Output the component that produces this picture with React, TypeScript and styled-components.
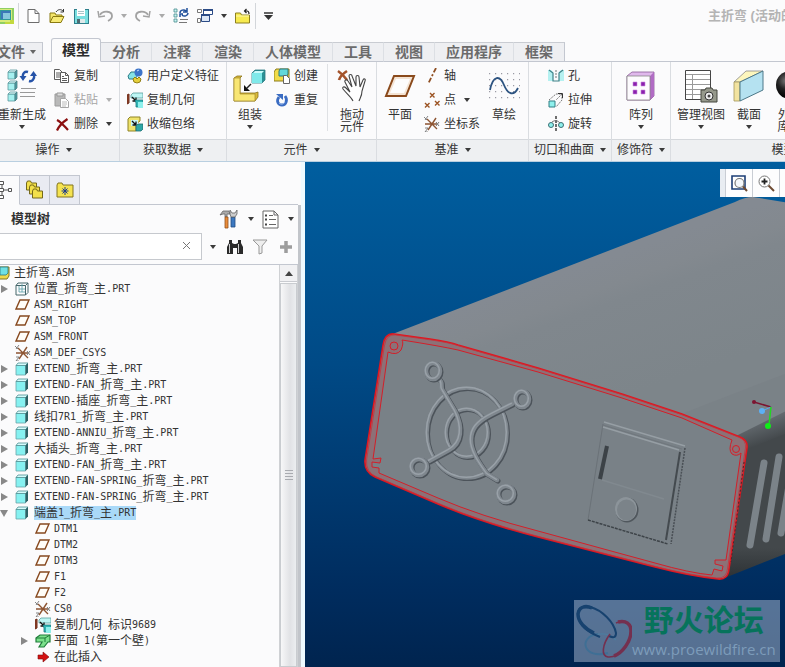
import React from "react";
import styled, { createGlobalStyle, css } from "styled-components";

const Global = createGlobalStyle`
  *, *::before, *::after { box-sizing: border-box; }
  html, body { margin: 0; height: 100%; }
  body {
    font-family: "Liberation Sans", "Noto Sans CJK SC", sans-serif;
    font-size: 12px;
    color: #333;
    background: #fbfbfc;
    overflow: hidden;
  }
  button {
    font: inherit; color: inherit; background: none; border: 0; padding: 0; margin: 0; cursor: pointer;
  }
  svg { display: block; flex: none; }
`;

/* ---------- layout parts ---------- */

const Page = styled.div`
  display: flex;
  flex-direction: column;
  height: 100vh;
  overflow: hidden;
`;

const QuickBar = styled.header`
  display: flex;
  align-items: center;
  gap: 8px;
  height: 38px;
  flex: none;
  padding-bottom: 6px;
`;

const QuickSep = styled.span`
  width: 1px;
  height: 26px;
  margin-left: -4px;
  background: #d3d6da;
`;

const DocTitle = styled.h1`
  margin: 0 0 0 auto;
  flex: 0 0 77px;
  overflow: hidden;
  white-space: nowrap;
  font-size: 13px;
  line-height: 16px;
  font-weight: 700;
  color: #b4b4b4;
`;

const TabStrip = styled.nav`
  display: flex;
  align-items: flex-end;
  height: 24px;
  flex: none;
  box-shadow: inset 0 -1px 0 #c3c7d0;
`;

const Tab = styled.button<{ $active?: boolean }>`
  height: 20px;
  padding: 0 11px;
  border-top: 1px solid #c9ccd2;
  border-right: 1px solid #dcdfe4;
  border-bottom: 1px solid #c3c7d0;
  background: #eeeff2;
  font-size: 14px;
  line-height: 17px;
  font-weight: 700;
  color: #6b6b6b;
  white-space: nowrap;
  &:last-child { border-right-color: #c3c7d0; }
  ${(p) =>
    p.$active &&
    css`
      height: 24px;
      line-height: 22px;
      padding: 0 10px;
      border: 1px solid #c3c7d0;
      border-bottom-color: #fbfbfc;
      border-radius: 3px 3px 0 0;
      background: #fbfbfc;
      color: #2b2b2b;
    `}
`;

const FileTab = styled(Tab)`
  display: flex;
  justify-content: flex-end;
  align-items: center;
  gap: 5px;
  width: 43px;
  padding: 0 6px 0 0;
  margin-right: 8px;
  border-right-color: #c3c7d0;
`;

const Ribbon = styled.div`
  display: flex;
  height: 100px;
  flex: none;
  overflow: hidden;
  border-bottom: 1px solid #b9cfe0;
`;

const Group = styled.section<{ $w: number }>`
  display: flex;
  flex-direction: column;
  flex: 0 0 ${(p) => p.$w}px;
  border-right: 1px solid #dadde1;
`;

const GroupBody = styled.div<{ $pad?: number }>`
  display: flex;
  flex: 1;
  padding-left: ${(p) => p.$pad ?? 0}px;
`;

const GroupFoot = styled.button<{ $shift?: number }>`
  display: flex;
  align-items: center;
  justify-content: center;
  gap: 6px;
  height: 22px;
  padding: 0 ${(p) => p.$shift ?? 0}px 2px 0;
  border-top: 1px solid #d5d8dc;
  background: #eef0f2;
  line-height: 18px;
  white-space: nowrap;
`;

const BigButton = styled.button<{ $w: number }>`
  display: flex;
  flex-direction: column;
  align-items: center;
  width: ${(p) => p.$w}px;
  flex: none;
  line-height: 12px;
  white-space: pre;
`;

const BigIcon = styled.span`
  display: flex;
  align-items: center;
  justify-content: center;
  height: 47px;
`;

const BigArrow = styled.span`
  margin-top: 4px;
`;

const LastLine = styled.span`
  display: flex;
  align-items: center;
  gap: 7px;
`;

const SmallColumn = styled.div<{ $indent?: number }>`
  display: flex;
  flex-direction: column;
  padding: 2px 0 0 ${(p) => p.$indent ?? 1}px;
`;

const SmallButton = styled.button<{ $off?: boolean }>`
  display: flex;
  align-items: center;
  gap: 4px;
  height: 24px;
  line-height: 24px;
  white-space: nowrap;
  color: ${(p) => (p.$off ? "#a5a5a5" : "#333")};
`;

const SmallArrow = styled.span`
  margin-left: 4px;
`;

const BodyRule = styled.span`
  width: 1px;
  margin: 2px 0 8px auto;
  background: #dfe1e4;
`;

const Main = styled.div`
  display: flex;
  flex: 1;
  min-height: 0;
`;

const Side = styled.aside`
  display: flex;
  flex-direction: column;
  flex: 0 0 305px;
  padding: 13px 4px 0 0;
  background: linear-gradient(to left, #eefaff 4px, #fbfbfc 4px);
`;

const SideTabs = styled.div`
  display: flex;
  height: 30px;
  flex: none;
  margin-right: 3px;
  box-shadow: inset 0 -1px 0 #c3c7d0;
`;

const SideTab = styled.button<{ $w: number; $active?: boolean }>`
  display: flex;
  align-items: center;
  justify-content: ${(p) => (p.$active ? "flex-start" : "center")};
  width: ${(p) => p.$w}px;
  border: solid #c3c7d0;
  border-width: 1px 1px 1px 0;
  background: ${(p) => (p.$active ? "#fbfbfc" : "#e9ebf2")};
  border-bottom-color: ${(p) => (p.$active ? "#fbfbfc" : "#c3c7d0")};
`;

const Panel = styled.div`
  display: flex;
  flex-direction: column;
  flex: 1;
  min-height: 0;
  border-right: 3px solid #c2c5ca;
`;

const PanelHead = styled.div`
  display: flex;
  align-items: center;
  height: 28px;
  flex: none;
  padding: 0 4px 0 11px;
`;

const PanelTitle = styled.h2`
  margin: 0 auto 0 0;
  font-size: 13px;
  line-height: 16px;
  font-weight: 700;
`;

const HeadTool = styled.button<{ $gap?: number }>`
  display: flex;
  align-items: center;
  gap: 9px;
  margin-left: ${(p) => p.$gap ?? 8}px;
`;

const SearchRow = styled.div`
  display: flex;
  align-items: center;
  height: 27px;
  flex: none;
  margin-bottom: 4px;
  padding-right: 6px;
`;

const SearchBox = styled.label`
  display: flex;
  align-items: center;
  flex: 1;
  height: 27px;
  border: solid #c6c9ce;
  border-width: 1px 1px 1px 0;
  background: #fff;
`;

const SearchInput = styled.input`
  flex: 1;
  min-width: 0;
  border: 0;
  outline: 0;
  background: transparent;
  font: inherit;
`;

const ClearButton = styled.button`
  width: 29px;
  padding: 0 10px 3px;
`;

const TreeArea = styled.div`
  display: flex;
  flex: 1;
  min-height: 0;
  border-top: 1px solid #c3c7d0;
`;

const Tree = styled.ul`
  flex: 1;
  margin: 0;
  padding: 0;
  list-style: none;
  overflow: hidden;
`;

const Row = styled.li<{ $level: number }>`
  display: flex;
  align-items: center;
  height: 16px;
  padding-left: ${(p) => Math.max(0, p.$level - 1) * 20}px;
  white-space: nowrap;
`;

const Toggle = styled.span`
  width: 15px;
  flex: none;
`;

const RowIcon = styled.span<{ $w: number }>`
  width: ${(p) => p.$w}px;
  flex: none;
`;

const RowLabel = styled.span<{ $sel?: boolean }>`
  display: flex;
  align-items: center;
  height: 14px;
  line-height: 14px;
  white-space: pre;
  background: ${(p) => (p.$sel ? "#a9d9f8" : "transparent")};
`;

const Latin = styled.span`
  font-family: "DejaVu Sans Mono", "Liberation Mono", monospace;
  font-size: 10px;
`;

const Scroll = styled.div`
  display: flex;
  flex-direction: column;
  width: 19px;
  border: solid #cfd1d4;
  border-width: 0 1px;
`;

const ScrollUp = styled.button`
  display: flex;
  align-items: center;
  justify-content: center;
  height: 17px;
  background: #f1f1f3;
  border-bottom: 1px solid #c9cbd0;
`;

const Thumb = styled.div`
  display: flex;
  align-items: center;
  justify-content: center;
  flex: 1;
  margin-top: 1px;
  border: 1px solid #c9ccd0;
  background: linear-gradient(to right, #f7f7f8, #e1e2e5 60%, #eceef0);
`;

const Viewport = styled.main`
  position: relative;
  flex: 1;
  min-width: 0;
  overflow: hidden;
  background: linear-gradient(#005e9f, #004a86 40%, #002c5e 85%, #00244f);
`;

const Scene = styled.svg`
  width: 100%;
  height: 100%;
`;

const ViewTools = styled.div`
  position: absolute;
  top: 7px;
  right: 0;
  display: flex;
  width: 65px;
  height: 28px;
  padding-left: 5px;
  overflow: hidden;
  background: linear-gradient(to right, #e9edf2 5px, #fdfdfe 5px);
`;

const ViewTool = styled.button`
  display: flex;
  align-items: center;
  justify-content: center;
  flex: 0 0 27px;
  border-left: 1px solid #c9cdd4;
`;

const Watermark = styled.div`
  position: absolute;
  right: 5px;
  bottom: 5px;
  display: flex;
  width: 206px;
  height: 62px;
  background: rgba(190, 205, 225, 0.45);
`;

const MarkText = styled.div`
  display: flex;
  flex-direction: column;
  align-items: center;
`;

const MarkName = styled.strong`
  margin-top: 3px;
  font-size: 30px;
  line-height: 36px;
  font-weight: 700;
  color: #06735b;
`;

const MarkUrl = styled.span`
  font-family: "Open Sans", "Noto Sans", sans-serif;
  font-size: 15px;
  line-height: 20px;
  color: #7d9cba;
`;

/* ---------- icons ---------- */

type SvgProps = { w: number; h: number; vb?: string; crisp?: boolean; children: React.ReactNode };
const Ico = ({ w, h, vb, crisp, children }: SvgProps) => (
  <svg width={w} height={h} viewBox={vb ?? `0 0 ${w} ${h}`} fill="none" shapeRendering={crisp ? "crispEdges" : undefined} aria-hidden>
    {children}
  </svg>
);

const Down = ({ c = "#3a3a3a", w = 6 }: { c?: string; w?: number }) => (
  <Ico w={w} h={4} vb="0 0 6 4"><path d="M0 0h6L3 4z" fill={c} /></Ico>
);

const AppIcon = () => (
  <Ico w={14} h={16} crisp>
    <path d="M0 0h14v16H0z" fill="#8fcf63" /><path d="M0 1h12v13H0z" fill="#d9eb7a" /><path d="M10 12h4v4h-9v-2h5z" fill="#c3d93f" />
    <path d="M0 2h11v10H0z" fill="#2f9a9a" /><path d="M1 3h9v8H1z" fill="#3b78b8" /><path d="M3 5h7v6H3z" fill="#86c8dd" />
  </Ico>
);
const NewIcon = () => (
  <Ico w={14} h={16}><path d="M1 1.500h7l4 4v9H1zM8 1.500v4h4" fill="#fff" stroke="#6d6d6d" /></Ico>
);
const OpenIcon = () => (
  <Ico w={16} h={16}>
    <path d="M1 14V5h5l1 2h6v2" fill="#f5e66b" stroke="#8a7a12" /><path d="M1 14.500l3-6h11l-3 6z" fill="#f7ea74" stroke="#8a7a12" />
    <path d="M7 4c2-3 5-3 7-1M14.500 1v3h-3" stroke="#333" />
  </Ico>
);
const SaveIcon = () => (
  <Ico w={16} h={16} crisp>
    <path d="M1 1h14v14H1z" fill="#7adfe0" stroke="#2f7f8c" /><path d="M4 1h8v7H4z" fill="#fff" /><path d="M5 3h6M5 5h6" stroke="#a9c4c8" />
    <path d="M4 11h8v4H4z" fill="#dfe9ea" /><path d="M4 11h3v4H4z" fill="#4f6a72" />
  </Ico>
);
const UndoIcon = ({ flip }: { flip?: boolean }) => (
  <Ico w={16} h={14}>
    <g transform={flip ? "matrix(-1 0 0 1 16 0)" : undefined} stroke="#a2a2a2">
      <path d="M3 6c3-5 12-4 12 1 0 3-2 4-4 5" strokeWidth="1.800" /><path d="M1 2l1 6 6-1" strokeWidth="1.500" />
    </g>
  </Ico>
);
const RegenSmall = () => (
  <Ico w={16} h={16}>
    <path d="M1 1h3v3H1zM1 6h3v3H1zM1 11h3v3H1z" fill="#c9f3f1" stroke="#4a8d90" strokeWidth=".8" />
    <path d="M7 5c0-3 4-4 6-2M14 0v4h-4M15 5c0 3-4 4-6 2M7 9V6h3" stroke="#1f4f99" strokeWidth="1.500" />
    <path d="M7 11.500h8M6 14.500h8" stroke="#777" />
  </Ico>
);
const WindowsIcon = () => (
  <Ico w={16} h={16}>
    <path d="M6.500 1.500h9v5h-9z" fill="#fff" stroke="#2b4b86" /><path d="M6 2h10" stroke="#2b4b86" strokeWidth="2" />
    <path d="M.500 1.500h4v3h-4zM.500 10.500h3v4h-3z" fill="#fff" stroke="#777" />
    <path d="M4.500 6.500h8v7h-8z" fill="#dce7f6" stroke="#2b4b86" /><path d="M4 7h9" stroke="#2b4b86" strokeWidth="2" />
  </Ico>
);
const FolderIcon = () => (
  <Ico w={16} h={16}>
    <path d="M.500 15V5h5l1 2h8v8z" fill="#f7ea4f" stroke="#8d8020" /><path d="M1 8h13" stroke="#fff9b0" />
    <path d="M9 3h3c2 0 2 1 2 3M11.500 1l-2 2 2 2" stroke="#222" strokeWidth="1.200" />
  </Ico>
);

const MiniCube = ({ x, y, s = 8 }: { x: number; y: number; s?: number }) => (
  <g transform={`translate(${x} ${y})`} strokeLinejoin="round">
    <path d={`M0 2h${s - 2}v${s - 2}H0z`} fill="#a5f0ef" stroke="#5b9ba0" strokeWidth=".8" />
    <path d={`M0 2l2-2h${s - 2}l-2 2z`} fill="#dffbfa" stroke="#5b9ba0" strokeWidth=".8" />
    <path d={`M${s - 2} 2l2-2v${s - 2}l-2 2z`} fill="#4a9fa5" stroke="#4f7f84" strokeWidth=".8" />
  </g>
);

const RegenBig = () => (
  <Ico w={30} h={34}>
    <MiniCube x={1} y={1} s={9} /><MiniCube x={1} y={12} s={9} /><MiniCube x={1} y={23} s={9} />
    <path d="M16 9c-1-5 2-7 5-6" stroke="#2653a8" strokeWidth="2.400" /><path d="M12.500 7h7l-3.500 5z" fill="#2653a8" />
    <path d="M27 5c1 5-2 8-5 7" stroke="#2653a8" strokeWidth="2.400" /><path d="M23 7h7l-3.500-5z" fill="#2653a8" />
    <path d="M14 19.500h15M13 23.500h15M13 27.500h15" stroke="#999" />
  </Ico>
);
const CopyIcon = ({ off }: { off?: boolean }) => (
  <Ico w={16} h={16}>
    {off ? (
      <>
        <path d="M1 2h10v12H1z" fill="#b9b9b9" stroke="#9b9b9b" /><path d="M3 1h6v3H3z" fill="#ddd" stroke="#999" />
        <path d="M6.500 6.500h5l3 3v6h-8z" fill="#fff" stroke="#a5a5a5" /><path d="M8 10h5M8 12h5M8 14h4" stroke="#bbb" />
      </>
    ) : (
      <>
        <path d="M.500 1.500h5l3 3v7h-8zM2 5h4M2 7h4M2 9h4" fill="#fff" stroke="#5d5d5d" />
        <path d="M6.500 4.500h5l3 3v7h-8zM11.500 4.500v3h3M8 8.500h2M8 10.500h5M8 12.500h5" fill="#fff" stroke="#5d5d5d" />
      </>
    )}
  </Ico>
);
const DeleteIcon = () => (
  <Ico w={16} h={16}><path d="M3 4c4 2 8 7 11 10M13.500 3C9 6 5 10 3 14.500" stroke="#8c1010" strokeWidth="2.200" /></Ico>
);
const UdfIcon = () => (
  <Ico w={16} h={16}>
    <path d="M1 8l3-4h5l2 3-3 4H2z" fill="#86e3e5" stroke="#2a7b86" /><circle cx="11.500" cy="4.500" r="4" fill="#3c74c9" />
    <path d="M10 3l2-1" stroke="#cfe0ff" /><path d="M6 11l2-2 2 2 2-2 2 2-1 3-3 1-3-1z" fill="#e5cf3a" stroke="#927f16" />
  </Ico>
);
const CopyGeom = () => (
  <Ico w={16} h={16}>
    <path d="M4 3l2-2h10v5H4z" fill="#bdf5f4" stroke="#5b9ea0" strokeWidth=".8" /><path d="M0 3l2-1v9l-2 1z" fill="#93452c" stroke="#6d2c18" />
    <path d="M5 5l4 4M9 5.500V9H5.500" stroke="#111" strokeWidth="1.300" />
    <path d="M9 15v-4l-1-3h8v7z" fill="#2fb6b6" stroke="#1d7c82" strokeWidth=".8" /><path d="M11 10h5v6h-5z" fill="#8ef0ec" />
  </Ico>
);
const ShrinkIcon = () => (
  <Ico w={16} h={16}>
    <path d="M1 3l2-2h10v4L9 8v7H1z" fill="#efe36c" stroke="#8f8324" /><path d="M4 4h7v6H4z" fill="#c9f7f6" />
    <path d="M5 5l4 4M9 5.500V9H5.500" stroke="#111" strokeWidth="1.300" /><path d="M9 10l2-2h5v5l-2 2H9z" fill="#2fa6a6" stroke="#1d6e72" strokeWidth=".8" />
  </Ico>
);
const AssembleIcon = () => (
  <Ico w={34} h={34}>
    <path d="M1 9l3-2h5l-2 2v15h15l3-1v5l-3 4H1z" fill="#d9b93a" stroke="#8a741d" strokeWidth=".8" /><path d="M1 9h6v16h15v7H1z" fill="#f8e673" stroke="#a58b28" strokeWidth=".7" />
    <path d="M19 4l3-3h10v10l-3 3H19z" fill="#2a9095" stroke="#2c7a80" strokeWidth=".8" /><path d="M19 4h10v10H19z" fill="#7fe9ea" /><path d="M20 4l2-2h9l-2 2z" fill="#c9fafa" />
    <path d="M18 15l-4 4" stroke="#222" strokeWidth="1.400" /><path d="M11 22v-6l6 6z" fill="#111" />
  </Ico>
);
const CreateIcon = () => (
  <Ico w={16} h={16}>
    <path d="M0 4l2-3h13v9l-2 3H0z" fill="#f1dc49" stroke="#8c7c1d" /><path d="M5 3l1-2h8v5l-1 2H5z" fill="#63d8da" stroke="#2c7a80" />
    <path d="M9.500 7.500h3l3 3v5h-6z" fill="#fff" stroke="#666" />
  </Ico>
);
const RepeatIcon = () => (
  <Ico w={16} h={16}><path d="M5 5c-3 4-1 8 3 8s6-5 3-9" stroke="#3a6cc2" strokeWidth="2.800" /><path d="M2 2h7v6z" fill="#3a6cc2" /><path d="M5 11c2 2 5 1 6-1" stroke="#a9c4f2" /></Ico>
);
const DragIcon = () => (
  <Ico w={30} h={34}>
    <path d="M1 2c3 2 6 5 9 9M10 2C7 4 3 7 2 11" stroke="#a4532b" strokeWidth="2.600" />
    <path d="M16 32c-2-4-6-7-10-12-1-2 1-3 3-1l4 4L8 13c-1-2 2-3 3-1l4 6-3-11c0-2 3-2 3 0l4 10V8c0-2 3-2 3 0l1 10 3-7c1-2 3-1 2 1l-3 10c0 5-2 7-3 10" fill="#fff" stroke="#444" strokeWidth="1.100" />
  </Ico>
);
const PlaneBig = () => (
  <Ico w={32} h={24}>
    <path d="M10 2h20l-8 20H2z" fill="#f4e4d4" stroke="#8a4a1c" strokeWidth="2" /><path d="M12 5h14l-6 14H6z" fill="#fdfdfd" />
  </Ico>
);
const AxisIcon = () => (
  <Ico w={16} h={16}><path d="M12 0L4 16" stroke="#8f4f22" strokeWidth="1.800" strokeDasharray="5 2 2 2" /></Ico>
);
const Cross = ({ x, y }: { x: number; y: number }) => (
  <path d={`M${x - 2} ${y - 2}l4.500 4.500M${x + 2.5} ${y - 2}l-4.500 4.500`} stroke="#9c5424" strokeWidth="1.400" />
);
const PointIcon = () => <Ico w={16} h={16}><Cross x={8} y={3} /><Cross x={3} y={13} /><Cross x={13} y={11} /></Ico>;
const CsysIcon = () => (
  <Ico w={16} h={16}>
    <path d="M3 3l10 10M12 2L4 14M1 8h12" stroke="#8d5432" strokeWidth="1.400" /><path d="M12 6l3 4M15 6l-3 4" stroke="#777" />
    <path d="M0 1l3 3M4 0L1 4M1 12h3l-3 4h3" stroke="#777" strokeWidth=".9" />
  </Ico>
);
const dots = Array.from({ length: 30 }, (_, i) => ({ x: (i % 6) * 6, y: Math.floor(i / 6) * 6 + 1 }));
const SketchIcon = () => (
  <Ico w={31} h={28}>
    {dots.map((d) => <path key={`${d.x}-${d.y}`} d={`M${d.x} ${d.y}h1.200v1.200h-1.200z`} fill="#9a9aa4" />)}
    <path d="M1 18C4 3 11 3 15 13S25 24 29 16" stroke="#2c5380" strokeWidth="1.800" />
  </Ico>
);
const HoleIcon = () => (
  <Ico w={16} h={14}>
    <path d="M0 1h3l2 2v9H0zM16 1h-3l-2 2v9h5z" fill="#b5f1f1" /><path d="M1 1l4 3v8h6V4l4-3" stroke="#3f8288" strokeWidth="1.200" /><path d="M8 1v9" stroke="#777" strokeDasharray="2 1" />
  </Ico>
);
const ExtrudeIcon = () => (
  <Ico w={16} h={16}><path d="M1 9h6v6H1z" fill="#8ef0ec" stroke="#337e85" /><path d="M1 8l7-6h6v6l-6 7M14 2L8 8" stroke="#777" strokeDasharray="2 1" /><path d="M10 1.500h4.500V6" stroke="#333" /></Ico>
);
const RevolveIcon = () => (
  <Ico w={16} h={16}><path d="M8 0v16" stroke="#333" strokeDasharray="3 1" strokeWidth="1.400" /><circle cx="3" cy="9" r="2.500" fill="#8ef0ec" stroke="#3c6f74" /><circle cx="13" cy="9" r="2.500" fill="#8ef0ec" stroke="#3c6f74" /><path d="M4 6c3-2 5-2 8 1" stroke="#777" /></Ico>
);
const PatternIcon = () => (
  <Ico w={30} h={32}>
    <path d="M1 6l5-4h22v24l-4 4H1z" fill="#e0b8ec" stroke="#8b5a98" strokeWidth=".8" /><path d="M24 6l4-4v24l-4 4z" fill="#b16cc4" /><path d="M1 6h23v24H1z" fill="#fdfbfe" stroke="#888" strokeWidth=".8" />
    {[[7, 12], [15, 12], [7, 20], [15, 20]].map(([x, y]) => (
      <path key={`${x}-${y}`} d={`M${x} ${y}h4v4h-4z`} fill="#8a1fae" stroke="#c98bdc" strokeWidth=".6" />
    ))}
  </Ico>
);
const ManageIcon = () => (
  <Ico w={34} h={34}>
    <path d="M1.500 1.500h25v29h-25z" fill="#fff" stroke="#444" /><path d="M2 5.500h24M2 10.500h24M2 15.500h24M2 20.500h24M2 25.500h24M8.500 5v25" stroke="#999" />
    <path d="M17 21h4l1-2h6l1 2h4v12H17z" fill="#96998c" stroke="#44463f" /><circle cx="25" cy="27" r="4" fill="#eee" stroke="#333" /><circle cx="25" cy="27" r="1.500" fill="#444" />
  </Ico>
);
const SectionIcon = () => (
  <Ico w={32} h={32}>
    <path d="M1 12L13 1h17L7 12z" fill="#fdf6bd" stroke="#888" strokeWidth=".8" /><path d="M1 12h6v19H1z" fill="#f2e3a0" stroke="#a4975c" strokeWidth=".8" />
    <path d="M7 12L30 1v19L7 31z" fill="#b5e2f1" stroke="#4c7889" />
  </Ico>
);
const BallIcon = () => (
  <Ico w={30} h={34}>
    <defs><radialGradient id="ball" cx=".35" cy=".35" r=".6"><stop offset="0" stopColor="#777" /><stop offset=".5" stopColor="#222" /><stop offset="1" stopColor="#000" /></radialGradient></defs>
    <circle cx="15" cy="16" r="14" fill="url(#ball)" />
  </Ico>
);

const TreeTabIcon = () => (
  <Ico w={13} h={20}>
    <path d="M0 10h9M2 4v12" stroke="#555" />
    <path d="M-.500 1.500h4v3h-4zM-.500 8.500h4v3h-4zM-.500 15.500h4v3h-4zM8.500 8.500h3v3h-3z" fill="#fff" stroke="#555" />
  </Ico>
);
const FoldersIcon = () => (
  <Ico w={18} h={20}>
    {[0, 4, 8].map((o) => (
      <path key={o} d={`M${0.5 + o * 0.75} ${10 + o}V${3 + o}l1-2h3l1 2h5v7z`} fill="#f3e04a" stroke="#75691a" />
    ))}
  </Ico>
);
const StarFolder = () => (
  <Ico w={18} h={16}><path d="M1 15V3l1-2h4l1 2h10v12z" fill="#f5e350" stroke="#827520" /><path d="M9 5v8M5.500 9h7M6.500 6.500l5 5M11.500 6.500l-5 5" stroke="#1c3b8c" /></Ico>
);
const ToolsIcon = () => (
  <Ico w={20} h={20}>
    <path d="M1 6l3-4h6l1 3H8v3H6V5H4z" fill="#aaa" stroke="#666" strokeWidth=".8" /><path d="M6 8h3v11H6z" fill="#e98c3a" stroke="#93511c" strokeWidth=".8" />
    <path d="M12 8h4v10h-4z" fill="#3c78c0" stroke="#214b82" strokeWidth=".8" /><path d="M11 1v4l1 3h4l2-3V1l-2 3h-3z" fill="#ccc" stroke="#666" strokeWidth=".8" />
  </Ico>
);
const ListIcon = () => (
  <Ico w={17} h={19}><path d="M1 1h11l4 4v13H1zM12 1v4h4" fill="#fff" stroke="#666" /><path d="M7 5.500h4M7 9.500h7M7 14.500h7" stroke="#666" /><path d="M3 4.500h2v2H3zM3 8.500h2v2H3zM3 13.500h2v2H3z" fill="#444" /></Ico>
);
const BinocularsIcon = () => (
  <Ico w={18} h={16}><path d="M3 1h3v3l2 1h2l2-1V1h3v3l2 4v7h-6V9H7v6H1V8l2-4z" fill="#2a2a2a" /><path d="M3.500 5v9M12.500 5v9" stroke="#cfcfcf" /></Ico>
);
const FunnelIcon = () => (
  <Ico w={16} h={16}><path d="M1 1h14l-5 6v7l-3 1V7z" fill="#eee" stroke="#999" /></Ico>
);
const PlusIcon = () => <Ico w={12} h={12}><path d="M6 0v12M0 6h12" stroke="#9d9d9d" strokeWidth="3.500" /></Ico>;
const ClearIcon = () => <Ico w={9} h={9}><path d="M1 1l7 7M8 1L1 8" stroke="#777" /></Ico>;

const PlaneIcon = () => <Ico w={16} h={12}><path d="M5 1h9l-4 9H1z" fill="#fffdf8" stroke="#87491f" strokeWidth="1.400" /></Ico>;
const PartIcon = () => (
  <Ico w={14} h={14}><path d="M1 3.500h9.500V13H1z" fill="#86f1f1" stroke="#6aa5a8" strokeWidth=".8" /><path d="M1 3.500L3 1h10l-2.500 2.500z" fill="#d5fbfb" stroke="#4d9093" strokeWidth=".8" /><path d="M10.500 3.500L13 1v9.500L10.500 13z" fill="#2b6266" /></Ico>
);
const RootIcon = () => (
  <Ico w={11} h={14}><path d="M-4 4l2-3H9v9l-2 3H-4z" fill="#efd94a" stroke="#83761d" /><path d="M0 1h8v6L6 9h-6z" fill="#6fe0e3" stroke="#2c7a80" strokeWidth=".8" /></Ico>
);
const WirePart = () => (
  <Ico w={14} h={14}><path d="M1 3.500h9.500V13H1zM1 3.500L3 1h10l-2.500 2.500M13 1v9.500L10.500 13" stroke="#44666a" /><path d="M4 4v6h6M7 2v8M4 7h6" stroke="#58a0a6" strokeWidth=".8" /></Ico>
);
const SheetIcon = () => (
  <Ico w={16} h={15}><path d="M1 4l4-3h10v7h-2l-4 5H4l3-5H1z" fill="#7be08b" stroke="#1f7c3a" strokeWidth="1.200" /><path d="M1 4h9l5-3M10 4v4" stroke="#1f7c3a" /></Ico>
);
const InsertIcon = () => <Ico w={16} h={12}><path d="M3 4h5V1l6 5-6 5V8H3z" fill="#d31212" stroke="#7d0c0c" strokeWidth=".6" /></Ico>;

const ZoomFit = () => (
  <Ico w={17} h={17}><path d="M1 1h13v13H1z" fill="#fff" stroke="#1d3e75" strokeWidth="1.600" /><circle cx="8.500" cy="8" r="4.500" fill="#f4f8fc" stroke="#777" strokeWidth="1.200" /><path d="M12 11.500l4 4.500" stroke="#6d4a32" strokeWidth="2" /></Ico>
);
const ZoomIn = () => (
  <Ico w={17} h={17}><circle cx="6.500" cy="6.500" r="5.500" fill="#fff" stroke="#777" /><path d="M6.500 3.500v6M3.500 6.500h6" stroke="#222" strokeWidth="1.800" /><path d="M10.500 10.500l5.500 5.500" stroke="#6d4a32" strokeWidth="2" /></Ico>
);

/* ---------- ribbon pieces ---------- */

type BigProps = { w: number; icon: React.ReactNode; label: string; last?: string; arrow?: boolean };
const Big = ({ w, icon, label, last, arrow }: BigProps) => (
  <BigButton type="button" $w={w}>
    <BigIcon>{icon}</BigIcon>
    {label}
    {last && <LastLine>{last}<Down /></LastLine>}
    {arrow && <BigArrow><Down /></BigArrow>}
  </BigButton>
);
const Small = ({ icon, label, arrow, off }: { icon: React.ReactNode; label: string; arrow?: boolean; off?: boolean }) => (
  <SmallButton type="button" $off={off} disabled={off}>
    {icon}
    {label}
    {arrow && <SmallArrow><Down c={off ? "#b0b0b0" : undefined} /></SmallArrow>}
  </SmallButton>
);
const Foot = ({ children, shift }: { children: string; shift?: number }) => (
  <GroupFoot type="button" $shift={shift}>{children}<Down /></GroupFoot>
);

/* ---------- tree ---------- */

type Kind = "root" | "wire" | "plane" | "csys" | "part" | "geom" | "sheet" | "insert";
const kinds: Record<Kind, React.ReactNode> = {
  root: <RootIcon />, wire: <WirePart />, plane: <PlaneIcon />, csys: <CsysIcon />,
  part: <PartIcon />, geom: <CopyGeom />, sheet: <SheetIcon />, insert: <InsertIcon />,
};
type TreeNode = { level: number; kind: Kind; text: string; open?: boolean; sel?: boolean };
const nodes: TreeNode[] = [
  { level: 0, kind: "root", text: "主折弯.ASM" },
  { level: 1, kind: "wire", text: "位置_折弯_主.PRT", open: false },
  { level: 1, kind: "plane", text: "ASM_RIGHT" },
  { level: 1, kind: "plane", text: "ASM_TOP" },
  { level: 1, kind: "plane", text: "ASM_FRONT" },
  { level: 1, kind: "csys", text: "ASM_DEF_CSYS" },
  { level: 1, kind: "part", text: "EXTEND_折弯_主.PRT", open: false },
  { level: 1, kind: "part", text: "EXTEND-FAN_折弯_主.PRT", open: false },
  { level: 1, kind: "part", text: "EXTEND-插座_折弯_主.PRT", open: false },
  { level: 1, kind: "part", text: "线扣7R1_折弯_主.PRT", open: false },
  { level: 1, kind: "part", text: "EXTEND-ANNIU_折弯_主.PRT", open: false },
  { level: 1, kind: "part", text: "大插头_折弯_主.PRT", open: false },
  { level: 1, kind: "part", text: "EXTEND-FAN_折弯_主.PRT", open: false },
  { level: 1, kind: "part", text: "EXTEND-FAN-SPRING_折弯_主.PRT", open: false },
  { level: 1, kind: "part", text: "EXTEND-FAN-SPRING_折弯_主.PRT", open: false },
  { level: 1, kind: "part", text: "端盖1_折弯_主.PRT", open: true, sel: true },
  { level: 2, kind: "plane", text: "DTM1" },
  { level: 2, kind: "plane", text: "DTM2" },
  { level: 2, kind: "plane", text: "DTM3" },
  { level: 2, kind: "plane", text: "F1" },
  { level: 2, kind: "plane", text: "F2" },
  { level: 2, kind: "csys", text: "CS0" },
  { level: 2, kind: "geom", text: "复制几何 标识9689" },
  { level: 2, kind: "sheet", text: "平面 1(第一个壁)", open: false },
  { level: 2, kind: "insert", text: "在此插入" },
];

const Mixed = ({ text }: { text: string }) => (
  <>
    {text.split(/([\x20-\x7e]+)/).filter(Boolean).map((run, i) =>
      /^[\x20-\x7e]/.test(run) ? <Latin key={i}>{run}</Latin> : <span key={i}>{run}</span>
    )}
  </>
);

const TreeRow = ({ node }: { node: TreeNode }) => (
  <Row $level={node.level}>
    {node.level > 0 && (
      <Toggle>
        {node.open === false && <Ico w={8} h={8}><path d="M1 0l7 4-7 4z" fill="#888" /></Ico>}
        {node.open && <Ico w={8} h={8}><path d="M0 1h8L4 8z" fill="#888" /></Ico>}
      </Toggle>
    )}
    <RowIcon $w={node.level ? 19 : 14}>{kinds[node.kind]}</RowIcon>
    <RowLabel $sel={node.sel}><Mixed text={node.text} /></RowLabel>
  </Row>
);

/* ---------- 3D view ---------- */

const FACE =
  "M394 334L430 339Q450 342 458 345L538 368L622 394L682 414L740 437Q748 440 747 448L729 569Q728 580 718 579Q690 576 655 567L538 537Q480 522 438 504L375 477Q364 472 365 460L383 345Q385 333 394 334Z";
const INNER =
  "M402 340Q440 346 458 350L538 372L622 398L682 418L732 440Q728 450 732 454Q737 457 741 453L726 560L715 560V564L723 566L722 571L714 569L712 575Q690 573 655 563L538 531Q480 516 438 498L379 473V468L372 467V462L380 463L381 458L373 459L388 352Q397 356 401 350Q404 343 402 340Z";

const wires = [
  "M438 378C445 384 439 387 443 391L455 411C463 427 462 443 449 450L429 461",
  "M512 404L492 414C476 422 471 430 471 440C471 452 480 464 487 474L497 480",
];
const ring = (cx: number, cy: number, rx: number, ry: number) =>
  `M${cx - rx} ${cy}A${rx} ${ry} 0 1 1 ${cx + rx} ${cy}A${rx} ${ry} 0 1 1 ${cx - rx} ${cy}`;
const eyes = [ring(433, 371, 7, 8), ring(522, 399, 7, 8), ring(419, 467, 8, 8), ring(506, 494, 8, 8)];

const Wire = ({ d, w = 4 }: { d: string; w?: number }) => (
  <g fill="none" strokeLinecap="round">
    <path d={d} stroke="#4c535a" strokeWidth={w} transform="translate(1 1)" />
    <path d={d} stroke="#7f878e" strokeWidth={w - 0.5} />
    <path d={d} stroke="#99a1a8" strokeWidth="1.500" transform="translate(-.7 -.7)" />
  </g>
);

const Model = () => (
  <Scene viewBox="305 162 480 505" preserveAspectRatio="xMinYMin slice" role="img" aria-label="三维模型">
    <defs>
      <linearGradient id="roof" x1="600" y1="260" x2="646" y2="390" gradientUnits="userSpaceOnUse">
        <stop offset="0" stopColor="#848a92" /><stop offset=".2" stopColor="#83898f" /><stop offset=".32" stopColor="#80878d" /><stop offset="1" stopColor="#7d858a" />
      </linearGradient>
      <linearGradient id="bend" x1="752" y1="410" x2="764" y2="444" gradientUnits="userSpaceOnUse">
        <stop offset="0" stopColor="#7a8187" /><stop offset=".5" stopColor="#5c6267" /><stop offset="1" stopColor="#42474a" />
      </linearGradient>
      <linearGradient id="flank" x1="0" y1="440" x2="0" y2="575" gradientUnits="userSpaceOnUse">
        <stop offset="0" stopColor="#43484b" /><stop offset=".8" stopColor="#43484b" /><stop offset="1" stopColor="#2f3437" />
      </linearGradient>
    </defs>
    <path d="M390 335L735 202Q745 197 753 197L790 203V430L747 450L680 414L570 379L457 345Z" fill="url(#roof)" />
    <path d="M684 413L790 372V412L740 438Z" fill="#798086" opacity=".7" />
    <path d="M736 436L790 409V440L747 455Z" fill="url(#bend)" />
    <path d="M745 450L790 432V552L727 577Z" fill="url(#flank)" />
    <g stroke="#7b8389" strokeWidth="7" strokeLinecap="round"><path d="M764 463L750 545M779 457L766 539M793 462L781 533" /></g>
    <path d={FACE} fill="#8c7177" stroke="#df1720" strokeWidth="1.600" />
    <path d={FACE} fill="none" stroke="#c5333c" strokeWidth=".8" transform="translate(557 457) scale(.992) translate(-557 -457)" />
    <path d={INNER} fill="#798187" stroke="#d2202a" strokeWidth="1" />
    <g fill="none" stroke="#d81d27"><circle cx="394" cy="346" r="4" /><circle cx="736" cy="449" r="3.500" /></g>
    <path d="M744 462L731 562" stroke="#47282d" strokeDasharray="2 2" />

    <Wire d={ring(467, 433, 40, 45)} w={4} /><Wire d={ring(467, 433, 21, 24)} w={4} />
    {wires.map((d) => <Wire key={d} d={d} w={5} />)}
    {eyes.map((d) => <Wire key={d} d={d} w={5} />)}

    <path d="M603 422L685 447L670 544L588 520Z" fill="#798187" />
    <path d="M603 424L588 520" stroke="#6b7278" />
    <path d="M604 422L685 446M603 427L679 450" stroke="#969ea4" strokeWidth="1.600" />
    <path d="M603 425L682 449" stroke="#70777d" />
    <path d="M607 446L600 479" stroke="#3c4247" strokeWidth="4" />
    <path d="M680 452L666 540" stroke="#444a4f" strokeWidth="2" /><path d="M685 448L671 544" stroke="#4a5056" strokeWidth="1.500" strokeDasharray="2 1" />
    <path d="M588 520L668 544" stroke="#3d4348" strokeWidth="1.500" strokeDasharray="3 1" />
    <path d="M602 480L664 499" fill="none" stroke="#81898f" strokeWidth="1.500" />
    <ellipse cx="627" cy="510" rx="11.500" ry="12.500" fill="#50575d" /><ellipse cx="626" cy="509" rx="11" ry="12" fill="#8c949a" /><ellipse cx="626.500" cy="510" rx="9.500" ry="10.500" fill="#7b8389" />

    <path d="M771 407L754 402" stroke="#7c1430" strokeWidth="1.500" /><circle cx="754" cy="402" r="2" fill="#7c1430" />
    <path d="M771 407L762 411" stroke="#58a9ee" /><circle cx="762" cy="411" r="3" fill="#5cb0f5" />
    <path d="M771 407L769 425" stroke="#20d820" strokeWidth="1.500" /><circle cx="768" cy="426" r="3" fill="#10ee18" />
  </Scene>
);

const MarkLogo = () => (
  <svg width="58" height="62" viewBox="0 0 58 62" fill="none" aria-hidden>
    <path d="M24 34C14 35 10 42 12 47C14 53 22 56 34 53" stroke="#3f6f95" strokeWidth="2" />
    <path d="M22 35C30 32 38 35 42 40" stroke="#4d7c9f" strokeWidth="1.300" />
    <path d="M26 37C16 33 6 26 4 16C3 8 8 5 16 7C28 10 40 22 42 33C42 38 39 38 35 36" stroke="#17426f" strokeWidth="2" />
    <path d="M20 33C11 29 4 22 4 14C5 7 11 5 18 8" stroke="#17426f" strokeWidth="3.500" />
    <path d="M42 23C50 19 57 22 57 31C57 44 45 58 34 57C27 56 28 45 36 34" stroke="#74304f" strokeWidth="1.600" />
    <path d="M44 22C52 20 57 24 57 31C57 42 48 53 40 56" stroke="#74304f" strokeWidth="3.500" />
  </svg>
);

/* ---------- page ---------- */

const tabs = ["模型", "分析", "注释", "渲染", "人体模型", "工具", "视图", "应用程序", "框架"];

export default function App() {
  return (
    <Page>
      <Global />
      <QuickBar>
        <button type="button" aria-label="应用"><AppIcon /></button>
        <QuickSep />
        <button type="button" aria-label="新建"><NewIcon /></button>
        <button type="button" aria-label="打开"><OpenIcon /></button>
        <button type="button" aria-label="保存"><SaveIcon /></button>
        <button type="button" aria-label="撤消"><UndoIcon /></button>
        <button type="button" aria-label="撤消列表"><Down c="#aaa" /></button>
        <button type="button" aria-label="重做"><UndoIcon flip /></button>
        <button type="button" aria-label="重做列表"><Down c="#aaa" /></button>
        <button type="button" aria-label="重新生成"><RegenSmall /></button>
        <button type="button" aria-label="窗口"><WindowsIcon /></button>
        <button type="button" aria-label="窗口列表"><Down /></button>
        <button type="button" aria-label="关闭"><FolderIcon /></button>
        <QuickSep />
        <button type="button" aria-label="自定义">
          <Ico w={9} h={8}><path d="M0 1h9" stroke="#333" strokeWidth="1.500" /><path d="M0 3h9L4.500 8z" fill="#333" /></Ico>
        </button>
        <DocTitle>主折弯 (活动的)</DocTitle>
      </QuickBar>

      <TabStrip>
        <FileTab type="button">文件<Down c="#666" /></FileTab>
        {tabs.map((t, i) => <Tab key={t} type="button" $active={i === 0}>{t}</Tab>)}
      </TabStrip>

      <Ribbon>
        <Group $w={120}>
          <GroupBody>
            <Big w={44} icon={<RegenBig />} label="重新生成" arrow />
            <SmallColumn $indent={10}>
              <Small icon={<CopyIcon />} label="复制" />
              <Small icon={<CopyIcon off />} label="粘贴" arrow off />
              <Small icon={<DeleteIcon />} label="删除" arrow />
            </SmallColumn>
          </GroupBody>
          <Foot shift={12}>操作</Foot>
        </Group>
        <Group $w={107}>
          <GroupBody $pad={6}>
            <SmallColumn>
              <Small icon={<UdfIcon />} label="用户定义特征" />
              <Small icon={<CopyGeom />} label="复制几何" />
              <Small icon={<ShrinkIcon />} label="收缩包络" />
            </SmallColumn>
          </GroupBody>
          <Foot>获取数据</Foot>
        </Group>
        <Group $w={150}>
          <GroupBody>
            <Big w={46} icon={<AssembleIcon />} label="组装" arrow />
            <SmallColumn>
              <Small icon={<CreateIcon />} label="创建" />
              <Small icon={<RepeatIcon />} label="重复" />
            </SmallColumn>
            <BodyRule />
            <Big w={48} icon={<DragIcon />} label={"拖动\n元件"} />
          </GroupBody>
          <Foot>元件</Foot>
        </Group>
        <Group $w={150}>
          <GroupBody>
            <Big w={46} icon={<PlaneBig />} label="平面" />
            <SmallColumn>
              <Small icon={<AxisIcon />} label="轴" />
              <Small icon={<PointIcon />} label="点" arrow />
              <Small icon={<CsysIcon />} label="坐标系" />
            </SmallColumn>
            <Big w={48} icon={<SketchIcon />} label="草绘" />
          </GroupBody>
          <Foot>基准</Foot>
        </Group>
        <Group $w={83}>
          <GroupBody $pad={18}>
            <SmallColumn>
              <Small icon={<HoleIcon />} label="孔" />
              <Small icon={<ExtrudeIcon />} label="拉伸" />
              <Small icon={<RevolveIcon />} label="旋转" />
            </SmallColumn>
          </GroupBody>
          <Foot>切口和曲面</Foot>
        </Group>
        <Group $w={59}>
          <GroupBody>
            <Big w={58} icon={<PatternIcon />} label="阵列" arrow />
          </GroupBody>
          <Foot>修饰符</Foot>
        </Group>
        <Group $w={262}>
          <GroupBody>
            <Big w={60} icon={<ManageIcon />} label="管理视图" arrow />
            <Big w={36} icon={<SectionIcon />} label="截面" arrow />
            <Big w={46} icon={<BallIcon />} label="外观" last="库" />
          </GroupBody>
          <Foot>模型显示</Foot>
        </Group>
      </Ribbon>

      <Main>
        <Side>
          <SideTabs>
            <SideTab type="button" $w={20} $active aria-label="模型树"><TreeTabIcon /></SideTab>
            <SideTab type="button" $w={30} aria-label="文件夹浏览器"><FoldersIcon /></SideTab>
            <SideTab type="button" $w={30} aria-label="收藏夹"><StarFolder /></SideTab>
          </SideTabs>
          <Panel>
            <PanelHead>
              <PanelTitle>模型树</PanelTitle>
              <HeadTool type="button" aria-label="设置"><ToolsIcon /><Down /></HeadTool>
              <HeadTool type="button" $gap={8} aria-label="显示"><ListIcon /><Down /></HeadTool>
            </PanelHead>
            <SearchRow>
              <SearchBox>
                <SearchInput type="text" aria-label="搜索模型树" />
                <ClearButton type="button" aria-label="清除"><ClearIcon /></ClearButton>
              </SearchBox>
              <HeadTool type="button" aria-label="搜索选项"><Down /></HeadTool>
              <HeadTool type="button" $gap={10} aria-label="查找"><BinocularsIcon /></HeadTool>
              <HeadTool type="button" aria-label="过滤"><FunnelIcon /></HeadTool>
              <HeadTool type="button" $gap={12} aria-label="添加"><PlusIcon /></HeadTool>
            </SearchRow>
            <TreeArea>
              <Tree>{nodes.map((n, i) => <TreeRow key={i} node={n} />)}</Tree>
              <Scroll>
                <ScrollUp type="button" aria-label="向上滚动"><Ico w={8} h={5}><path d="M0 5l4-5 4 5z" fill="#444" /></Ico></ScrollUp>
                <Thumb><Ico w={8} h={12} crisp><path d="M0 1h8M0 4h8M0 7h8M0 10h8" stroke="#a9abb0" /></Ico></Thumb>
              </Scroll>
            </TreeArea>
          </Panel>
        </Side>
        <Viewport>
          <Model />
          <ViewTools>
            <ViewTool type="button" aria-label="重新调整"><ZoomFit /></ViewTool>
            <ViewTool type="button" aria-label="放大"><ZoomIn /></ViewTool>
            <ViewTool type="button" aria-label="缩小"><ZoomIn /></ViewTool>
          </ViewTools>
          <Watermark>
            <MarkLogo />
            <MarkText>
              <MarkName>野火论坛</MarkName>
              <MarkUrl>www.proewildfire.cn</MarkUrl>
            </MarkText>
          </Watermark>
        </Viewport>
      </Main>
    </Page>
  );
}
